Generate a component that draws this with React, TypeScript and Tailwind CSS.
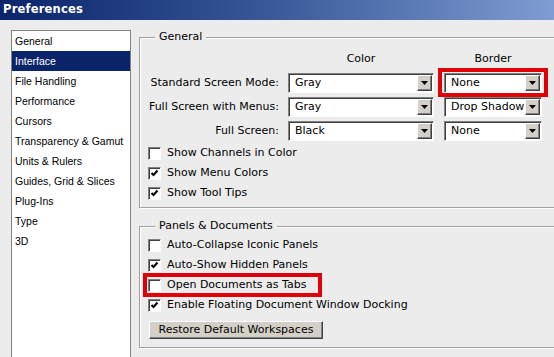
import React from 'react';

const SIDEBAR = [
  'General',
  'Interface',
  'File Handling',
  'Performance',
  'Cursors',
  'Transparency & Gamut',
  'Units & Rulers',
  'Guides, Grid & Slices',
  'Plug-Ins',
  'Type',
  '3D',
];

const SCREEN_MODES = [
  { label: 'Standard Screen Mode:', color: 'Gray', border: 'None' },
  { label: 'Full Screen with Menus:', color: 'Gray', border: 'Drop Shadow' },
  { label: 'Full Screen:', color: 'Black', border: 'None' },
];

function ArrowButton() {
  return (
    <div className="w-[15px] h-[16px] bg-[#d4d0c8] border border-t-white border-l-white border-b-[#404040] border-r-[#404040] shadow-[inset_-1px_-1px_0_#808080] flex items-center justify-center shrink-0">
      <svg width="7" height="4" viewBox="0 0 7 4">
        <path d="M0 0H7L3.5 4Z" fill="#000" />
      </svg>
    </div>
  );
}

function Combo({ value, width }: { value: string; width: string }) {
  return (
    <div
      className={`${width} h-[20px] bg-white border border-t-[#808080] border-l-[#808080] border-b-white border-r-white shadow-[inset_1px_1px_0_#404040] flex items-center justify-between pl-[6px] pr-[1px] shrink-0`}
    >
      <span className="whitespace-nowrap overflow-hidden">{value}</span>
      <ArrowButton />
    </div>
  );
}

function Checkbox({ label, checked }: { label: string; checked?: boolean }) {
  return (
    <div className="h-[20px] flex items-center pl-[8px] gap-[6px]">
      <div className="w-[13px] h-[13px] bg-white border border-t-[#808080] border-l-[#808080] border-b-white border-r-white shadow-[inset_1px_1px_0_#404040] flex items-center justify-center shrink-0">
        {checked && (
          <svg width="9" height="9" viewBox="0 0 9 9">
            <path d="M1.5 4l2 2 4-4.5" stroke="#000" strokeWidth="2" fill="none" />
          </svg>
        )}
      </div>
      <span className="whitespace-nowrap">{label}</span>
    </div>
  );
}

function GroupBox({ title, className, children }: { title: string; className?: string; children: React.ReactNode }) {
  return (
    <fieldset
      className={`w-[430px] border border-[#a0a0a0] shadow-[inset_1px_1px_0_#fff,1px_1px_0_#fff] ${className ?? ''}`}
    >
      <legend className="ml-[15px] px-[4px] leading-[16px] bg-[#ececec]">{title}</legend>
      {children}
    </fieldset>
  );
}

export default function App() {
  return (
    <div className="w-[554px] h-[357px] overflow-hidden bg-[#ececec] text-[11px] text-black font-['DejaVu_Sans',sans-serif]">
      {/* Title bar */}
      <div className="h-[20px] bg-gradient-to-r from-[#0a246a] via-[#3a5a9a] to-[#7f9dd2] pl-[3px] flex items-center">
        <span className="text-white font-bold text-[11.5px] tracking-[0.2px]">Preferences</span>
      </div>

      <div className="flex items-start pl-[11px]">
        {/* Category list */}
        <div className="mt-[10px] w-[120px] shrink-0 h-[340px] bg-white border border-[#828282] font-['Liberation_Sans',sans-serif] text-[10.5px]">
          {SIDEBAR.map((item) => (
            <div
              key={item}
              className={`h-[20px] leading-[20px] pl-[3px] whitespace-nowrap ${
                item === 'Interface' ? 'bg-[#0a246a] text-white' : ''
              }`}
            >
              {item}
            </div>
          ))}
        </div>

        {/* Settings */}
        <div className="ml-[8px] pt-[9px] relative shrink-0">
          <GroupBox title="General" className="pb-[4px]">
            <div className="mt-[6px] h-[16px] flex leading-[16px]">
              <div className="w-[148px]" />
              <div className="w-[146px] text-center">Color</div>
              <div className="w-[98px] ml-[10px] text-center">Border</div>
            </div>
            <div className="mt-[6px] flex flex-col gap-[4px]">
              {SCREEN_MODES.map((row) => (
                <div key={row.label} className="flex items-center h-[20px]">
                  <div className="w-[139px] text-right whitespace-nowrap">{row.label}</div>
                  <div className="ml-[9px]">
                    <Combo value={row.color} width="w-[146px]" />
                  </div>
                  <div className="ml-[10px]">
                    <Combo value={row.border} width="w-[98px]" />
                  </div>
                </div>
              ))}
            </div>
            <div className="mt-[2px]">
              <Checkbox label="Show Channels in Color" />
              <Checkbox label="Show Menu Colors" checked />
              <Checkbox label="Show Tool Tips" checked />
            </div>
          </GroupBox>

          <GroupBox title="Panels & Documents" className="mt-[10px] pb-[8px]">
            <div className="mt-[1px]">
              <Checkbox label="Auto-Collapse Iconic Panels" />
              <Checkbox label="Auto-Show Hidden Panels" checked />
              <Checkbox label="Open Documents as Tabs" />
              <Checkbox label="Enable Floating Document Window Docking" checked />
            </div>
            <button className="mt-[6px] ml-[9px] h-[18px] w-[174px] bg-[#d4d0c8] border border-t-white border-l-white border-b-[#404040] border-r-[#404040] shadow-[inset_-1px_-1px_0_#808080] leading-[14px] whitespace-nowrap">
              Restore Default Workspaces
            </button>
          </GroupBox>

          {/* Highlight annotations */}
          <div className="absolute left-[299px] top-[48px] w-[110px] h-[29px] border-[4px] border-[#e0000a] pointer-events-none" />
          <div className="absolute left-[4px] top-[253px] w-[179px] h-[24px] border-[4px] border-[#e0000a] pointer-events-none" />
        </div>
      </div>
    </div>
  );
}
